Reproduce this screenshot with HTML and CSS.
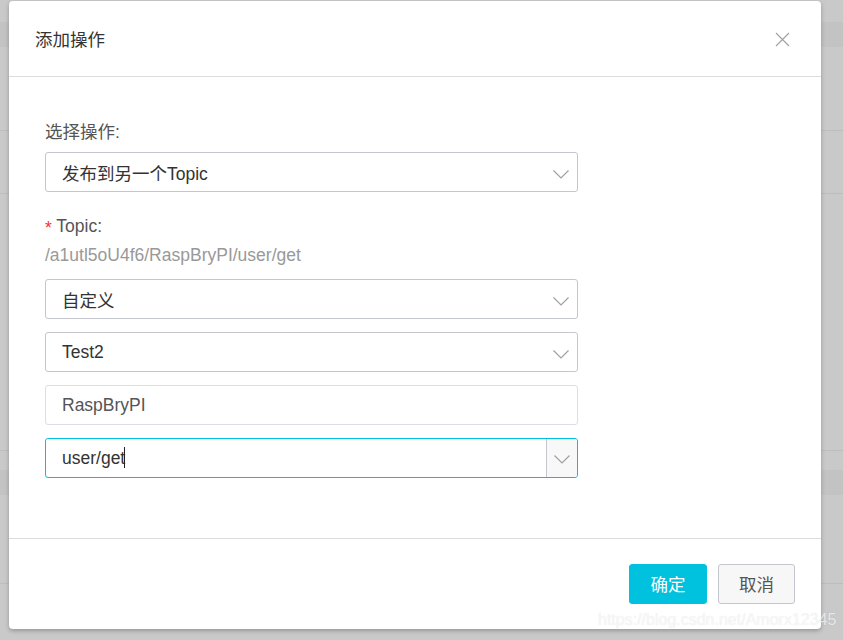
FILE: index.html
```html
<!DOCTYPE html>
<html>
<head>
<meta charset="utf-8">
<link rel="stylesheet" href="styles.css">
</head>
<body>
<div class="page">
  <div class="bg-row r1"></div>
  <div class="bg-row r2 band"></div>
  <div class="bg-row r3 line"></div>
  <div class="bg-row r4 line"></div>
  <div class="bg-row r5 line"></div>
  <div class="bg-row r6"></div>
  <div class="bg-row r7 band"></div>
  <div class="bg-row r8 line"></div>
</div>

<div class="modal">
  <div class="modal-header">
    <span class="modal-title">添加操作</span>
    <svg class="close" width="15" height="15" viewBox="0 0 15 15"><path d="M1 1 L14 14 M14 1 L1 14" stroke="#a3a3a3" stroke-width="1.2" fill="none"/></svg>
  </div>
  <div class="modal-body">
    <div class="label">选择操作:</div>
    <div class="select"><span class="val">发布到另一个Topic</span><svg class="chev" width="16" height="9" viewBox="0 0 16 9"><path d="M0.5 0.5 L8 8 L15.5 0.5" stroke="#a0a0a0" stroke-width="1.2" fill="none"/></svg></div>

    <div class="label topic-label"><span class="req">*</span> Topic:</div>
    <div class="path">/a1utl5oU4f6/RaspBryPI/user/get</div>

    <div class="fields">
      <div class="select"><span class="val">自定义</span><svg class="chev" width="16" height="9" viewBox="0 0 16 9"><path d="M0.5 0.5 L8 8 L15.5 0.5" stroke="#a0a0a0" stroke-width="1.2" fill="none"/></svg></div>
      <div class="select"><span class="val">Test2</span><svg class="chev" width="16" height="9" viewBox="0 0 16 9"><path d="M0.5 0.5 L8 8 L15.5 0.5" stroke="#a0a0a0" stroke-width="1.2" fill="none"/></svg></div>
      <div class="input"><span class="val muted">RaspBryPI</span></div>
      <div class="combo"><span class="val">user/get<span class="caret"></span></span><span class="combo-btn"><svg width="16" height="9" viewBox="0 0 16 9"><path d="M0.5 0.5 L8 8 L15.5 0.5" stroke="#a0a0a0" stroke-width="1.2" fill="none"/></svg></span></div>
    </div>
  </div>
  <div class="modal-footer">
    <button class="btn primary">确定</button>
    <button class="btn normal">取消</button>
  </div>
</div>

<div class="watermark">https://blog.csdn.net/Amorx12345</div>
</body>
</html>
```
FILE: styles.css
```css
html, body {
  margin: 0;
  padding: 0;
  width: 843px;
  height: 640px;
  overflow: hidden;
  background: #c9c9c9;
  font-family: "Liberation Sans", "Noto Sans CJK SC", sans-serif;
}

.page {
  display: flex;
  flex-direction: column;
}
.bg-row { box-sizing: border-box; }
.r1 { height: 22px; }
.r2 { height: 25px; }
.r3 { height: 84px; }
.r4 { height: 63px; }
.r5 { height: 257px; }
.r6 { height: 19px; }
.r7 { height: 25px; }
.r8 { height: 89px; }
.band { background: #c3c3c3; }
.line { border-bottom: 1px solid #bdbdbd; }

.modal {
  position: absolute;
  left: 9px;
  top: 1px;
  width: 812px;
  height: 628px;
  background: #fff;
  border-radius: 4px;
  box-shadow: 0 2px 4px rgba(0,0,0,0.25);
  display: flex;
  flex-direction: column;
}

.modal-header {
  height: 75px;
  border-bottom: 1px solid #dcdcdc;
  display: flex;
  align-items: center;
  justify-content: space-between;
  padding: 0 31px 0 26px;
  box-sizing: content-box;
}
.modal-title {
  font-size: 17.5px;
  color: #333;
}
.close { position: relative; top: 1px; }

.modal-body {
  flex: 1;
  padding: 45px 0 0 36px;
  border-bottom: 1px solid #dcdcdc;
}

.label {
  font-size: 17.5px;
  color: #555;
  line-height: 20px;
  height: 20px;
  margin-bottom: 10px;
}

.select, .input, .combo {
  width: 533px;
  height: 40px;
  box-sizing: border-box;
  border: 1px solid #c4c6cf;
  border-radius: 3px;
  display: flex;
  align-items: center;
  justify-content: space-between;
  padding: 0 8px 0 16px;
  font-size: 17.5px;
  color: #333;
}
.chev { position: relative; top: 2px; }

.topic-label {
  margin-top: 24px;
  margin-bottom: 0;
}
.req {
  color: #ff3030;
  font-size: 17.5px;
  position: relative;
  top: 2px;
}
.path {
  font-size: 17.5px;
  color: #999;
  line-height: 20px;
  margin-top: 9px;
}

.fields {
  margin-top: 14px;
  display: flex;
  flex-direction: column;
  gap: 13px;
}

.input {
  border-color: #dcdee3;
}
.muted { color: #555; }

.combo {
  border-color: #00c1de;
  padding-right: 0;
  overflow: hidden;
}
.caret {
  display: inline-block;
  width: 1px;
  height: 21px;
  background: #222;
  vertical-align: -4px;
  margin-left: -1px;
}
.combo-btn {
  width: 31px;
  height: 100%;
  background: #f8f8f8;
  border-left: 1px solid #c4c6cf;
  display: flex;
  align-items: center;
  justify-content: center;
  padding-top: 3px;
  box-sizing: border-box;
}

.modal-footer {
  height: 90px;
  display: flex;
  justify-content: flex-end;
  align-items: flex-start;
  padding: 25px 26px 0 0;
  box-sizing: border-box;
  gap: 11px;
}
.btn {
  height: 40px;
  border-radius: 3px;
  font-family: "Liberation Sans", "Noto Sans CJK SC", sans-serif;
  font-size: 17.5px;
  padding: 0 0 2px 0;
  cursor: pointer;
}
.primary {
  width: 78px;
  background: #00c1de;
  border: 1px solid #00c1de;
  color: #fff;
}
.normal {
  width: 77px;
  background: #f7f7f7;
  border: 1px solid #c4c6cf;
  color: #555;
}

.watermark {
  position: absolute;
  left: 598px;
  top: 611px;
  font-size: 16px;
  color: rgba(255,255,255,0.7);
  text-shadow: 0 0 1px rgba(0,0,0,0.12);
  white-space: nowrap;
}
```
